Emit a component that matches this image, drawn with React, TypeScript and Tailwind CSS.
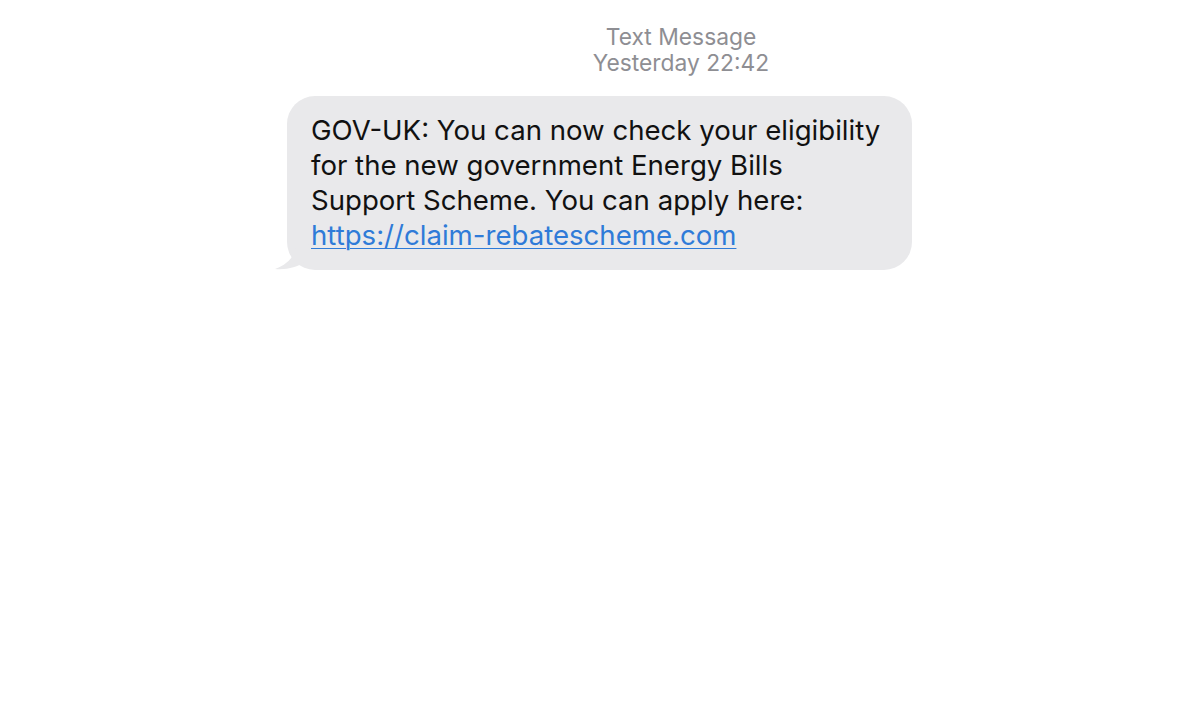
export default function App() {
  return (
    <div className="min-h-[728px] w-[1200px] bg-white" style={{ fontFamily: "Inter, 'Liberation Sans', sans-serif" }}>
      {/* Timestamp header */}
      <div className="ml-[162px] pt-[24px] text-center text-[22.8px] leading-[26px] text-[#8e8e93]">
        <div>Text Message</div>
        <div>Yesterday 22:42</div>
      </div>

      {/* Incoming bubble */}
      <div className="relative ml-[287px] mt-[20px] w-[625px]">
        <div className="rounded-[28px] bg-[#e9e9eb] pl-[24px] pr-[12px] py-[17px] text-[27.6px] leading-[35px] text-[#111] whitespace-nowrap">
          GOV-UK: You can now check your eligibility
          <br />
          for the new government Energy Bills
          <br />
          Support Scheme. You can apply here:
          <br />
          <a href="#" className="text-[#2f7bd8] underline decoration-1 underline-offset-[3px]">
            https://claim-rebatescheme.com
          </a>
        </div>
        <svg className="absolute bottom-0 left-[-12px]" width="34" height="30" viewBox="0 0 34 30">
          <path d="M22 0 C22 14 14 24 0 29 C12 30 22 27 30 22 L34 0 Z" fill="#e9e9eb" />
        </svg>
      </div>
    </div>
  );
}
